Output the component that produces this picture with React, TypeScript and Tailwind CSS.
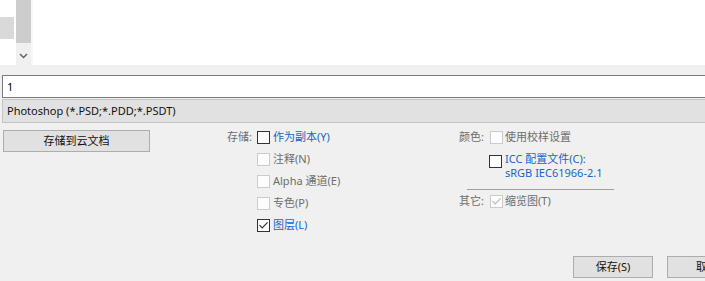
import React from "react";

type CS = "on" | "off" | "dis" | "dison";

const Check = ({ state }: { state: CS }) => {
  const enabled = state === "on" || state === "off";
  return (
    <span
      className={
        enabled
          ? "inline-flex h-[13px] w-[13px] shrink-0 items-center justify-center border border-[#333333] bg-white"
          : "inline-flex h-[13px] w-[13px] shrink-0 items-center justify-center border border-[#cccccc] bg-[#fcfcfc]"
      }
    >
      {(state === "on" || state === "dison") && (
        <svg width="11" height="11" viewBox="0 0 11 11">
          <path
            d="M1.5 5.2 L4.2 8 L9.6 2.4"
            fill="none"
            stroke={state === "on" ? "#333333" : "#bdbdbd"}
            strokeWidth="1.2"
          />
        </svg>
      )}
    </span>
  );
};

const Row = ({
  label,
  labelW,
  state,
  text,
  blue,
}: {
  label?: string;
  labelW: "mid" | "right";
  state: CS;
  text: string;
  blue?: boolean;
}) => (
  <div className="flex h-[22px] items-center">
    <span
      className={
        labelW === "mid"
          ? "w-[30px] shrink-0 text-[#6d6d6d]"
          : "w-[31px] shrink-0 text-[#6d6d6d]"
      }
    >
      {label ?? ""}
    </span>
    <Check state={state} />
    <span
      className={
        blue
          ? "ml-[3px] whitespace-nowrap text-[#1466c8]"
          : "ml-[3px] whitespace-nowrap text-[#6d6d6d]"
      }
    >
      {text}
    </span>
  </div>
);

export default function App() {
  return (
    <div className="h-[281px] w-[705px] overflow-hidden bg-[#f0f0f0] font-['Noto_Sans','Noto_Sans_CJK_SC',sans-serif] text-[11px] leading-[14px] text-black">
      {/* top list area */}
      <div className="flex h-[65px] bg-white">
        <div className="w-[16px] shrink-0 pt-[17px]">
          <div className="h-[22px] w-[14px] bg-[#d9d9d9]" />
        </div>
        <div className="flex w-[15px] shrink-0 flex-col">
          <div className="h-[43px] bg-[#cdcdcd]" />
          <div className="flex flex-1 items-center justify-center bg-[#f0f0f0] pt-[4px]">
            <svg width="9" height="6" viewBox="0 0 9 6">
              <path d="M1 1 L4.5 4.5 L8 1" fill="none" stroke="#606060" strokeWidth="1.4" />
            </svg>
          </div>
        </div>
        <div className="w-[2px] shrink-0 bg-[#f7f7f7]" />
      </div>

      {/* file name input */}
      <div className="ml-[2px] mt-[10px] flex h-[23px] w-[720px] items-center border border-[#7a7a7a] bg-white pl-[4px]">
        1
      </div>
      {/* format combo */}
      <div className="ml-[2px] mt-[1px] flex h-[24px] w-[720px] items-center border border-[#c4c4c4] bg-[#e1e1e1] pl-[4px] text-[#111111]">
        Photoshop (*.PSD;*.PDD;*.PSDT)
      </div>

      {/* options */}
      <div className="flex">
        <div className="w-[227px] shrink-0 pl-[3px] pt-[7px]">
          <div className="flex h-[22px] w-[147px] items-center justify-center border border-[#adadad] bg-[#e1e1e1] text-[#111111]">
            存储到云文档
          </div>
        </div>
        <div className="w-[232px] shrink-0 pt-[3px]">
          <Row label="存储:" labelW="mid" state="off" text="作为副本(Y)" blue />
          <Row labelW="mid" state="dis" text="注释(N)" />
          <Row labelW="mid" state="dis" text="Alpha 通道(E)" />
          <Row labelW="mid" state="dis" text="专色(P)" />
          <Row labelW="mid" state="on" text="图层(L)" blue />
        </div>
        <div className="flex-1 pt-[3px]">
          <div className="flex h-[22px] items-center">
            <span className="w-[31px] shrink-0 text-[#6d6d6d]">颜色:</span>
            <Check state="dis" />
            <span className="ml-[2px] whitespace-nowrap text-[#6d6d6d]">使用校样设置</span>
          </div>
          <div className="mt-[4px] flex items-start pl-[30px]">
            <span className="mt-[3px]">
              <Check state="off" />
            </span>
            <div className="ml-[3px] whitespace-nowrap text-[#1466c8]">
              <div>ICC 配置文件(C):</div>
              <div>sRGB IEC61966-2.1</div>
            </div>
          </div>
          <div className="ml-[8px] mt-[9px] h-px w-[147px] bg-[#a0a0a0]" />
          <div className="flex h-[22px] items-center">
            <span className="w-[31px] shrink-0 text-[#6d6d6d]">其它:</span>
            <Check state="dison" />
            <span className="ml-[2px] whitespace-nowrap text-[#6d6d6d]">缩览图(T)</span>
          </div>
        </div>
      </div>

      {/* bottom buttons */}
      <div className="mt-[20px] flex gap-[14px] pl-[573px]">
        <div className="flex h-[22px] w-[80px] shrink-0 items-center justify-center border border-[#adadad] bg-[#e1e1e1] text-[#111111]">
          保存(S)
        </div>
        <div className="flex h-[22px] w-[80px] shrink-0 items-center justify-center border border-[#adadad] bg-[#e1e1e1] text-[#111111]">
          取消
        </div>
      </div>
    </div>
  );
}
